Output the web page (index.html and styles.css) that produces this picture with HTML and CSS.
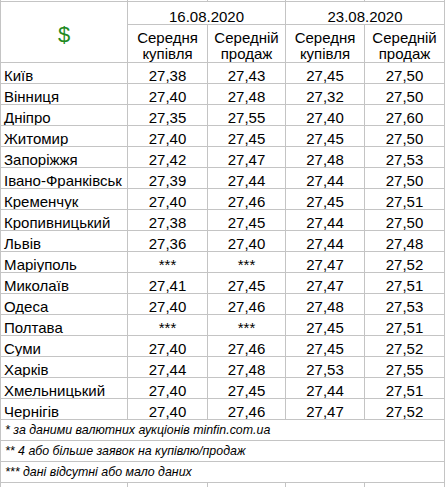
FILE: index.html
```html
<!DOCTYPE html>
<html lang="uk">
<head>
<meta charset="utf-8">
<title>Курс долара</title>
<link rel="stylesheet" href="styles.css">
</head>
<body>
<div class="sheet">
  <div class="c pad"></div><div class="c pad"></div><div class="c pad"></div><div class="c pad"></div><div class="c pad"></div>

  <div class="c cur">$</div>
  <div class="c date">16.08.2020</div>
  <div class="c date">23.08.2020</div>

  <div class="c sub">Середня<br>купівля</div>
  <div class="c sub">Середній<br>продаж</div>
  <div class="c sub">Середня<br>купівля</div>
  <div class="c sub">Середній<br>продаж</div>

  <div class="c city">Київ</div><div class="c n">27,38</div><div class="c n">27,43</div><div class="c n">27,45</div><div class="c n">27,50</div>
  <div class="c city">Вінниця</div><div class="c n">27,40</div><div class="c n">27,48</div><div class="c n">27,32</div><div class="c n">27,50</div>
  <div class="c city">Дніпро</div><div class="c n">27,35</div><div class="c n">27,55</div><div class="c n">27,40</div><div class="c n">27,60</div>
  <div class="c city">Житомир</div><div class="c n">27,40</div><div class="c n">27,45</div><div class="c n">27,45</div><div class="c n">27,50</div>
  <div class="c city">Запоріжжя</div><div class="c n">27,42</div><div class="c n">27,47</div><div class="c n">27,48</div><div class="c n">27,53</div>
  <div class="c city">Івано-Франківськ</div><div class="c n">27,39</div><div class="c n">27,44</div><div class="c n">27,44</div><div class="c n">27,50</div>
  <div class="c city">Кременчук</div><div class="c n">27,40</div><div class="c n">27,46</div><div class="c n">27,45</div><div class="c n">27,51</div>
  <div class="c city">Кропивницький</div><div class="c n">27,38</div><div class="c n">27,45</div><div class="c n">27,44</div><div class="c n">27,50</div>
  <div class="c city">Львів</div><div class="c n">27,36</div><div class="c n">27,40</div><div class="c n">27,44</div><div class="c n">27,48</div>
  <div class="c city">Маріуполь</div><div class="c n">***</div><div class="c n">***</div><div class="c n">27,47</div><div class="c n">27,52</div>
  <div class="c city">Миколаїв</div><div class="c n">27,41</div><div class="c n">27,45</div><div class="c n">27,47</div><div class="c n">27,51</div>
  <div class="c city">Одеса</div><div class="c n">27,40</div><div class="c n">27,46</div><div class="c n">27,48</div><div class="c n">27,53</div>
  <div class="c city">Полтава</div><div class="c n">***</div><div class="c n">***</div><div class="c n">27,45</div><div class="c n">27,51</div>
  <div class="c city">Суми</div><div class="c n">27,40</div><div class="c n">27,46</div><div class="c n">27,45</div><div class="c n">27,52</div>
  <div class="c city">Харків</div><div class="c n">27,44</div><div class="c n">27,48</div><div class="c n">27,53</div><div class="c n">27,55</div>
  <div class="c city">Хмельницький</div><div class="c n">27,40</div><div class="c n">27,45</div><div class="c n">27,44</div><div class="c n">27,51</div>
  <div class="c city">Чернігів</div><div class="c n">27,40</div><div class="c n">27,46</div><div class="c n">27,47</div><div class="c n">27,52</div>

  <div class="c note">* за даними валютних аукціонів minfin.com.ua</div>
  <div class="c note">** 4 або більше заявок на купівлю/продаж</div>
  <div class="c note">*** дані відсутні або мало даних</div>

  <div class="c"></div><div class="c"></div><div class="c"></div><div class="c"></div><div class="c"></div>
</div>
</body>
</html>
```
FILE: styles.css
```css
html, body {
  margin: 0;
  padding: 0;
  background: #fff;
}

body {
  font-family: "Liberation Sans", Arial, sans-serif;
  color: #000;
  overflow: hidden;
}

.sheet {
  display: grid;
  grid-template-columns: 126px 79px 77px 78px 79px;
  grid-template-rows: 1px 22px 37px repeat(17, 20px) repeat(3, 20px) 20px;
  gap: 1px;
  padding: 0 1px;
  width: max-content;
  background: #c4c4c4;
}

.c {
  background: #fff;
  display: flex;
  align-items: flex-end;
  justify-content: center;
  font-size: 15px;
  line-height: 15px;
  white-space: nowrap;
  overflow: hidden;
}

.pad {
  height: 1px;
}

.cur {
  grid-row: span 2;
  align-items: center;
  font-size: 22px;
  line-height: 22px;
  color: #1f8a1f;
  padding-top: 5px;
}

.date {
  grid-column: span 2;
}

.sub {
  text-align: center;
  line-height: 16px;
}

.city {
  justify-content: flex-start;
  padding-left: 3px;
}

.note {
  grid-column: span 5;
  justify-content: flex-start;
  padding-left: 4px;
  padding-bottom: 3px;
  font-style: italic;
  font-size: 12.4px;
  line-height: 13px;
}
```
